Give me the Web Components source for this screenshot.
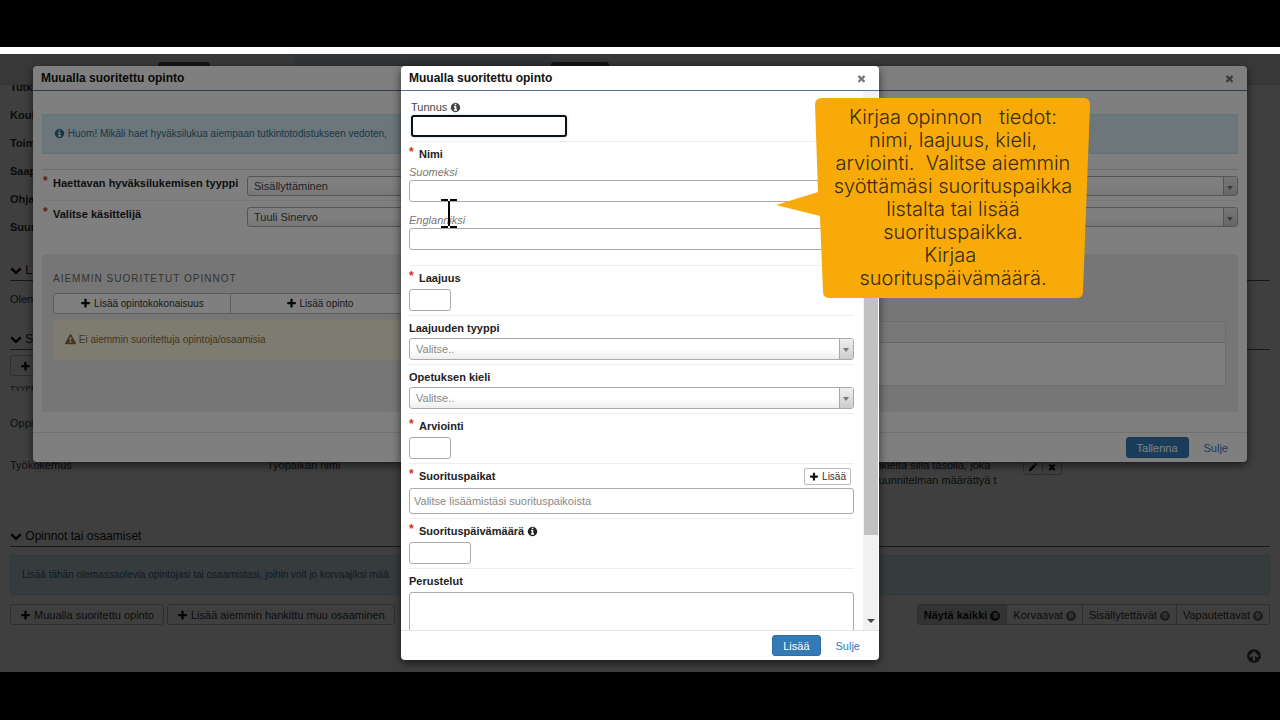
<!DOCTYPE html>
<html lang="fi">
<head>
    <meta charset="UTF-8">
    <meta name="viewport" content="width=device-width, initial-scale=1.0">
    <title>Muualla suoritettu opinto</title>
    <style>
        body {
            margin: 0;
            background: #000;
            color: #333;
            font: 11px/16px "Liberation Sans", Arial, sans-serif;
        }
    </style>
</head>
<body>
    <study-app></study-app>

    <script>
        const ICONS = {
            'plus': 'M1600 736v192q0 40-28 68t-68 28h-416v416q0 40-28 68t-68 28h-192q-40 0-68-28t-28-68v-416h-416q-40 0-68-28t-28-68v-192q0-40 28-68t68-28h416v-416q0-40 28-68t68-28h192q40 0 68 28t28 68v416h416q40 0 68 28t28 68z',
            'info': 'M1152 1376v-160q0-14-9-23t-23-9h-96v-512q0-14-9-23t-23-9h-320q-14 0-23 9t-9 23v160q0 14 9 23t23 9h96v320h-96q-14 0-23 9t-9 23v160q0 14 9 23t23 9h448q14 0 23-9t9-23zm-128-896v-160q0-14-9-23t-23-9h-192q-14 0-23 9t-9 23v160q0 14 9 23t23 9h192q14 0 23-9t9-23zm640 416q0 209-103 385.5t-279.5 279.5-385.5 103-385.5-103-279.5-279.5-103-385.5 103-385.5 279.5-279.5 385.5-103 385.5 103 279.5 279.5 103 385.5z',
            'chevron': 'M1683 808l-742 741q-19 19-45 19t-45-19l-742-741q-19-19-19-45.5t19-45.5l166-165q19-19 45-19t45 19l531 531 531-531q19-19 45-19t45 19l166 165q19 19 19 45.5t-19 45.5z',
            'warning': 'M1024 1375v-190q0-14-9.5-23.5t-22.5-9.5h-192q-13 0-22.5 9.5t-9.5 23.5v190q0 14 9.5 23.5t22.5 9.5h192q13 0 22.5-9.5t9.5-23.5zm-2-374l18-459q0-12-10-19-13-11-24-11h-220q-11 0-24 11-10 7-10 21l17 457q0 10 10 16.5t24 6.5h185q14 0 23.5-6.5t10.5-16.5zm-14-934l768 1408q35 63-2 126-17 29-46.5 46t-63.5 17h-1536q-34 0-63.5-17t-46.5-46q-37-63-2-126l768-1408q17-31 47-49t65-18 65 18 47 49z',
            'times': 'M1490 1322q0 40-28 68l-136 136q-28 28-68 28t-68-28l-294-294-294 294q-28 28-68 28t-68-28l-136-136q-28-28-28-68t28-68l294-294-294-294q-28-28-28-68t28-68l136-136q28-28 68-28t68 28l294 294 294-294q28-28 68-28t68 28l136 136q28 28 28 68t-28 68l-294 294 294 294q28 28 28 68z',
            'pencil': 'M128 1664l110-470 780-780 360 360-780 780zM1110 322l130-130q68-68 136 0l224 224q68 68 0 136l-130 130z',
            'up': 'M1412 897q0-27-18-45l-362-362-91-91q-18-18-45-18t-45 18l-91 91-362 362q-18 18-18 45t18 45l91 91q18 18 45 18t45-18l189-189v502q0 26 19 45t45 19h128q26 0 45-19t19-45v-502l189 189q19 19 45 19t45-19l91-91q18-18 18-45zm252-1q0 209-103 385.5t-279.5 279.5-385.5 103-385.5-103-279.5-279.5-103-385.5 103-385.5 279.5-279.5 385.5-103 385.5 103 279.5 279.5 103 385.5z'
        };

        /** Font icon drawn as inline SVG. */
        class StudyIcon extends HTMLElement {
            constructor() {
                super();
                this.attachShadow({ mode: 'open' });
            }

            connectedCallback() {
                this.shadowRoot.innerHTML = `
                    <style>
                        :host { display: inline-block; width: 11px; height: 11px; vertical-align: -2px; }
                        svg { display: block; width: 100%; height: 100%; fill: currentColor; }
                    </style>
                    <svg viewBox="0 0 1792 1792" aria-hidden="true"><path d="${ICONS[this.getAttribute('name')]}"/></svg>
                `;
            }
        }
        customElements.define('study-icon', StudyIcon);

        /** Button. kind: default, primary, link or filter. */
        class StudyButton extends HTMLElement {
            constructor() {
                super();
                this.attachShadow({ mode: 'open' });
            }

            connectedCallback() {
                const icon = this.getAttribute('icon');
                const label = this.getAttribute('label') || '';
                this.shadowRoot.innerHTML = `
                    <style>
                        :host { display: inline-flex; }
                        button {
                            flex: 1;
                            box-sizing: border-box;
                            height: 21px;
                            padding: 0 9px;
                            border: 1px solid #bbb;
                            border-radius: 3px;
                            background: #fff;
                            color: #333;
                            font: inherit;
                            line-height: 16px;
                            white-space: nowrap;
                        }
                        study-icon { color: #111; }
                        :host([kind="primary"]) button {
                            padding: 0 10px;
                            background: #337ab7;
                            border-color: #2e6da4;
                            color: #fff;
                        }
                        :host([kind="link"]) button {
                            padding: 0 10px;
                            background: none;
                            border-color: transparent;
                            color: #337ab7;
                        }
                        :host([size="small"]) button { height: 17px; padding: 0 4px; font-size: 10px; line-height: 14px; border-radius: 2px; }
                        :host([size="small"]) study-icon { width: 10px; height: 10px; }
                        :host([group]) button { border-radius: 0; }
                        :host([group]:not(:first-child)) button { border-left: 0; }
                        :host([group]:first-child) button { border-radius: 3px 0 0 3px; }
                        :host([group]:last-child) button { border-radius: 0 3px 3px 0; }
                        :host([kind="filter"]) button { padding: 0 6px; }
                        :host([active]) button { background: #ccc; font-weight: bold; color: #111; }
                        .count {
                            display: inline-block;
                            width: 10px;
                            height: 10px;
                            border-radius: 5px;
                            background: #777;
                            color: #fff;
                            font: bold 8px/10px "Liberation Sans", Arial, sans-serif;
                            text-align: center;
                            vertical-align: 1px;
                        }
                        :host([active]) .count { background: #222; }
                    </style>
                    <button type="button" ${label ? '' : `aria-label="${this.getAttribute('hint')}"`}>${icon ? `<study-icon name="${icon}"></study-icon> ` : ''}${label}${this.hasAttribute('count') ? ` <span class="count">${this.getAttribute('count')}</span>` : ''}</button>
                `;
            }
        }
        customElements.define('study-button', StudyButton);

        /** Message box. kind: info or warning. */
        class StudyAlert extends HTMLElement {
            constructor() {
                super();
                this.attachShadow({ mode: 'open' });
                this.shadowRoot.innerHTML = `
                    <style>
                        :host {
                            display: block;
                            box-sizing: border-box;
                            padding: 11px;
                            border: 1px solid #bce8f1;
                            background: #d9edf7;
                            color: #31708f;
                            font-size: 10px;
                            white-space: nowrap;
                            overflow: hidden;
                        }
                        :host([kind="warning"]) { background: #fcf8e3; border-color: #faf2cc; color: #8a6d3b; }
                    </style>
                    <slot></slot>
                `;
            }
        }
        customElements.define('study-alert', StudyAlert);

        class SectionHeading extends HTMLElement {
            constructor() {
                super();
                this.attachShadow({ mode: 'open' });
                this.shadowRoot.innerHTML = `
                    <style>
                        :host { display: block; border-bottom: 1px solid #5a5a78; }
                        h2 { margin: 0; padding-bottom: 1px; font-size: 12px; font-weight: normal; line-height: 18px; color: #111; }
                        study-icon { width: 12px; height: 12px; }
                    </style>
                    <h2><study-icon name="chevron"></study-icon> <slot></slot></h2>
                `;
            }
        }
        customElements.define('section-heading', SectionHeading);

        /** Form row: label and its control. type: text, select, languages or textarea. */
        class FormRow extends HTMLElement {
            constructor() {
                super();
                this.attachShadow({ mode: 'open' });
            }

            control() {
                const hint = this.getAttribute('placeholder') || '';
                switch (this.getAttribute('type')) {
                    case 'select':
                        return `<span class="select"><select id="c"><option>${hint}</option></select></span>`;
                    case 'textarea':
                        return '<textarea id="c" rows="4"></textarea>';
                    case 'languages':
                        return `
                            <label class="lang" for="c">Suomeksi</label><input id="c" type="text">
                            <label class="lang next" for="en">Englanniksi</label><input id="en" type="text">`;
                    default:
                        return `<input id="c" type="text" placeholder="${hint}">`;
                }
            }

            connectedCallback() {
                const info = this.hasAttribute('info') ? ' <study-icon name="info"></study-icon>' : '';
                this.shadowRoot.innerHTML = `
                    <style>
                        :host { display: block; padding: 4px 0; border-bottom: 1px solid #eee; }
                        :host([type="languages"]) { padding-bottom: 15px; }
                        :host([code]) { padding: 7px 2px 4px; }
                        :host([last]) { border: 0; }
                        .head { display: flex; justify-content: space-between; margin-bottom: 3px; }
                        :host([type="select"]) .head, :host([type="languages"]) .head { margin-bottom: 2px; }
                        :host([code]) .head { margin-bottom: 0; }
                        .head label { font-weight: bold; color: #222; }
                        :host([code]) label { font-weight: normal; color: #444; }
                        .star { display: inline-block; width: 10px; color: #d43020; font-size: 12px; line-height: 12px; vertical-align: top; }
                        ::slotted(study-button) { margin-right: 3px; }
                        .lang { display: block; font-style: italic; color: #777; }
                        .next { margin-top: 10px; }
                        input, select, textarea {
                            display: block;
                            box-sizing: border-box;
                            width: 100%;
                            height: 22px;
                            margin: 0;
                            padding: 0 4px;
                            border: 1px solid #aaa;
                            border-radius: 3px;
                            background: #fff;
                            color: #444;
                            font: inherit;
                        }
                        input::placeholder { color: #888; }
                        :host([width="small"]) input { width: 42px; }
                        :host([width="date"]) input { width: 62px; }
                        :host([tall]) input { height: 26px; }
                        :host([code]) input { width: 156px; border: 2px solid #101010; box-shadow: 0 0 3px #b9d3ee; }
                        textarea { height: 72px; resize: none; }
                        .select { display: block; position: relative; }
                        select {
                            appearance: none;
                            padding: 0 6px;
                            color: #888;
                            background: linear-gradient(#fff 50%, #eee);
                        }
                        .select::before {
                            content: "";
                            position: absolute;
                            inset: 1px 1px 1px auto;
                            width: 13px;
                            border-left: 1px solid #aaa;
                            border-radius: 0 2px 2px 0;
                            background: linear-gradient(#f0f0f0, #ccc);
                            pointer-events: none;
                        }
                        .select::after {
                            content: "";
                            position: absolute;
                            right: 5px;
                            top: 10px;
                            border: 3px solid transparent;
                            border-top: 4px solid #777;
                            border-bottom: 0;
                            pointer-events: none;
                        }
                        :host([inline]) {
                            display: grid;
                            grid-template-columns: 205px 1fr;
                            padding: 6px 0 4px;
                        }
                        :host([inline]) .head { margin: 0; padding-left: 1px; }
                        :host([inline]) .head label { margin-top: -1px; }
                        :host([inline]) select { height: 20px; color: #444; }
                    </style>
                    <div class="head"><label for="c">${this.hasAttribute('required') ? '<span class="star">*</span>' : ''}${this.getAttribute('label')}${info}</label><slot></slot></div>
                    <div>${this.control()}</div>
                `;
            }
        }
        customElements.define('form-row', FormRow);

        /** Dialog over a half-transparent backdrop. */
        class StudyModal extends HTMLElement {
            constructor() {
                super();
                this.attachShadow({ mode: 'open' });
            }

            connectedCallback() {
                this.shadowRoot.innerHTML = `
                    <style>
                        :host {
                            position: absolute;
                            inset: 0;
                            display: flex;
                            justify-content: center;
                            align-items: flex-start;
                            padding: 12px 33px;
                            background: rgba(0, 0, 0, 0.5);
                        }
                        section {
                            display: flex;
                            flex-direction: column;
                            flex: 1;
                            border-radius: 4px;
                            background: #fff;
                            box-shadow: 0 3px 10px rgba(0, 0, 0, 0.6);
                            overflow: hidden;
                        }
                        :host([narrow]) section { max-width: 478px; max-height: 100%; }
                        header {
                            display: flex;
                            flex: none;
                            justify-content: space-between;
                            align-items: center;
                            height: 24px;
                            padding: 0 12px 0 8px;
                            border-bottom: 1px solid #5a70a0;
                        }
                        h1 { margin: 0; font-size: 12px; line-height: 16px; color: #111; }
                        .close { padding: 0; border: 0; background: none; color: #777; line-height: 0; }
                        .main { display: flex; flex: 1; min-height: 0; overflow: hidden; }
                        .content { flex: 1; min-width: 0; padding: 23px 9px 20px; }
                        :host([narrow]) .content { padding: 1px 9px 0 8px; }
                        .bar { display: none; }
                        :host([narrow]) .bar {
                            display: flex;
                            flex-direction: column;
                            justify-content: flex-end;
                            width: 15px;
                            padding-top: 17px;
                            margin-right: 1px;
                            background: #f1f1f1;
                        }
                        .thumb { flex: 1; background: #c1c1c1; margin: 0 0 84px 1px; }
                        .down {
                            margin: 0 auto 7px;
                            border: 4px solid transparent;
                            border-top-color: #444;
                            border-bottom: 0;
                        }
                        footer {
                            display: flex;
                            flex: none;
                            justify-content: flex-end;
                            gap: 4px;
                            padding: 4px 8px;
                            border-top: 1px solid #e5e5e5;
                        }
                    </style>
                    <section role="dialog" aria-label="${this.getAttribute('heading')}">
                        <header>
                            <h1>${this.getAttribute('heading')}</h1>
                            <button class="close" type="button" aria-label="Sulje"><study-icon name="times"></study-icon></button>
                        </header>
                        <div class="main">
                            <div class="content"><slot></slot></div>
                            <div class="bar"><div class="thumb"></div><div class="down"></div></div>
                        </div>
                        <footer>
                            <study-button kind="primary" label="${this.getAttribute('action')}"></study-button>
                            <study-button kind="link" label="Sulje"></study-button>
                        </footer>
                    </section>
                `;
            }
        }
        customElements.define('study-modal', StudyModal);

        /** Instruction bubble pointing at the form. */
        class HelpBubble extends HTMLElement {
            constructor() {
                super();
                this.attachShadow({ mode: 'open' });
                this.shadowRoot.innerHTML = `
                    <style>
                        :host { position: absolute; display: block; width: 315px; height: 202px; }
                        svg { position: absolute; inset: 0; }
                        p {
                            position: relative;
                            margin: 0;
                            padding: 9px 0 0 39px;
                            color: #3a2c10;
                            font: 300 20px/23px Inter, "Open Sans", sans-serif;
                            text-align: center;
                            white-space: pre;
                        }
                    </style>
                    <svg width="315" height="202" viewBox="0 0 315 202" aria-hidden="true">
                        <path fill="#f8ab08" d="M46 1H308Q314 1 314 8L307 195Q307 201 300 201H54Q47 201 47 195L44 119L0 108L42 95L39 8Q39 1 46 1Z"/>
                    </svg>
                    <p><slot></slot></p>
                `;
            }
        }
        customElements.define('help-bubble', HelpBubble);

        /** The plan page that lies behind the dialogs. */
        class PlanPage extends HTMLElement {
            constructor() {
                super();
                this.attachShadow({ mode: 'open' });
                this.shadowRoot.innerHTML = `
                    <style>
                        :host { display: block; background: #fff; }
                        nav {
                            display: flex;
                            align-items: flex-end;
                            height: 30px;
                            background: #e3e3e3;
                            border-bottom: 1px solid #ccc;
                        }
                        nav span { height: 22px; border-radius: 3px 3px 0 0; background: #555; }
                        nav span:nth-child(1) { margin-left: 158px; width: 52px; }
                        nav span:nth-child(2) { margin-left: 85px; width: 256px; height: 30px; border-radius: 0; background: #c8d4dc; }
                        nav span:nth-child(3) { width: 58px; }
                        main { padding: 0 10px; }
                        ul { margin: 0; padding: 0; list-style: none; font-weight: bold; line-height: 28px; color: #333; overflow: hidden; }
                        li { height: 28px; }
                        ul li:first-child { height: 16px; line-height: 4px; }
                        p { margin: 0; }
                        .first { margin-top: 20px; }
                        .goal { margin: 10px 0 23px; }
                        .add { display: flex; margin: 5px 0 6px; }
                        table { width: 100%; border-collapse: collapse; table-layout: fixed; }
                        th, td { padding: 0; text-align: left; vertical-align: top; font-weight: normal; line-height: 15px; white-space: nowrap; }
                        th { font-size: 8px; line-height: 14px; }
                        tr { height: 42px; }
                        thead tr { height: 34px; }
                        tbody tr:last-child { height: 69px; }
                        .name { width: 257px; }
                        .wide { width: 606px; }
                        .reason { width: 150px; }
                        .tools { display: flex; }
                        study-alert { margin: 8px 0 9px; }
                        .row { display: flex; gap: 3px; }
                        .filters { display: flex; margin-left: auto; }
                        .top { display: flex; justify-content: flex-end; padding: 23px 8px 0; }
                        .top a { color: #444; line-height: 0; }
                        .top study-icon { width: 16px; height: 16px; }
                    </style>
                    <nav><span></span><span></span><span></span></nav>
                    <main>
                        <ul><li>Tutk</li><li>Koul</li><li>Toim</li><li>Saap</li><li>Ohja</li><li>Suun</li></ul>
                        <section-heading class="first">L</section-heading>
                        <p class="goal">Olen</p>
                        <section-heading>S</section-heading>
                        <div class="add"><study-button icon="plus" hint="Lisää"></study-button></div>
                        <table>
                            <thead><tr><th class="name">TYYPPI</th><th class="wide"></th><th class="reason"></th><th></th></tr></thead>
                            <tbody>
                                <tr><td>Oppi</td><td></td><td></td><td></td></tr>
                                <tr>
                                    <td>Työkokemus</td>
                                    <td>Työpaikan nimi</td>
                                    <td>inkielta sillä tasolla, joka<br>suunnitelman määrättyä t</td>
                                    <td><div class="tools"><study-button group size="small" icon="pencil" hint="Muokkaa"></study-button><study-button group size="small" icon="times" hint="Poista"></study-button></div></td>
                                </tr>
                            </tbody>
                        </table>
                        <section-heading>Opinnot tai osaamiset</section-heading>
                        <study-alert>Lisää tähän olemassaolevia opintojasi tai osaamistasi, joihin voit jo korvaajiksi mää</study-alert>
                        <div class="row">
                            <study-button icon="plus" label="Muualla suoritettu opinto"></study-button>
                            <study-button icon="plus" label="Lisää aiemmin hankittu muu osaaminen"></study-button>
                            <div class="filters">
                                <study-button group kind="filter" active label="Näytä kaikki" count="0"></study-button>
                                <study-button group kind="filter" label="Korvaavat" count="0"></study-button>
                                <study-button group kind="filter" label="Sisällytettävät" count="0"></study-button>
                                <study-button group kind="filter" label="Vapautettavat" count="0"></study-button>
                            </div>
                        </div>
                        <div class="top"><a href="#" aria-label="Sivun alkuun"><study-icon name="up"></study-icon></a></div>
                    </main>
                `;
            }
        }
        customElements.define('plan-page', PlanPage);

        /** Whole view: page, two stacked dialogs, bubble and pointer. */
        class StudyApp extends HTMLElement {
            constructor() {
                super();
                this.attachShadow({ mode: 'open' });
                this.shadowRoot.innerHTML = `
                    <style>
                        :host {
                            display: flex;
                            flex-direction: column;
                            box-sizing: border-box;
                            height: 100vh;
                            padding: 47px 0 48px;
                        }
                        .strip { height: 7px; background: #fff; }
                        .stage { position: relative; flex: 1; min-height: 0; overflow: hidden; }
                        plan-page { min-height: 100%; }
                        .form { border-top: 1px solid #ddd; margin: 15px 0 23px; }
                        .panel {
                            display: grid;
                            grid-template-columns: 356px 1fr;
                            gap: 10px;
                            padding: 17px 12px 26px 11px;
                            border-radius: 3px;
                            background: #ededed;
                        }
                        h3 { margin: 0 0 6px; font-size: 10px; font-weight: normal; line-height: 16px; letter-spacing: 1px; color: #666; }
                        .pair { display: grid; grid-template-columns: 1fr 1fr; font-size: 10px; margin-bottom: 6px; }
                        .result { margin: 50px 0 0; border: 1px solid #ddd; background: #fff; }
                        .result::before { content: ""; display: block; height: 20px; background: #f0f0f0; border-bottom: 1px solid #ccc; }
                        .result::after { content: ""; display: block; height: 42px; }
                        help-bubble { left: calc(50% + 136px); top: 43px; }
                        .pointer { position: absolute; left: calc(50% - 200px); top: 145px; }
                    </style>
                    <div class="strip"></div>
                    <div class="stage">
                        <plan-page></plan-page>
                        <study-modal heading="Muualla suoritettu opinto" action="Tallenna">
                            <study-alert><study-icon name="info"></study-icon> Huom! Mikäli haet hyväksilukua aiempaan tutkintotodistukseen vedoten,</study-alert>
                            <div class="form">
                                <form-row inline required type="select" label="Haettavan hyväksilukemisen tyyppi" placeholder="Sisällyttäminen"></form-row>
                                <form-row inline last required type="select" label="Valitse käsittelijä" placeholder="Tuuli Sinervo"></form-row>
                            </div>
                            <div class="panel">
                                <div>
                                    <h3>AIEMMIN SUORITETUT OPINNOT</h3>
                                    <div class="pair">
                                        <study-button group icon="plus" label="Lisää opintokokonaisuus"></study-button>
                                        <study-button group icon="plus" label="Lisää opinto"></study-button>
                                    </div>
                                    <study-alert kind="warning"><study-icon name="warning"></study-icon> Ei aiemmin suoritettuja opintoja/osaamisia</study-alert>
                                </div>
                                <div class="result"></div>
                            </div>
                        </study-modal>
                        <study-modal narrow heading="Muualla suoritettu opinto" action="Lisää">
                            <form-row code info label="Tunnus"></form-row>
                            <form-row required type="languages" label="Nimi"></form-row>
                            <form-row required width="small" label="Laajuus"></form-row>
                            <form-row type="select" label="Laajuuden tyyppi" placeholder="Valitse.."></form-row>
                            <form-row type="select" label="Opetuksen kieli" placeholder="Valitse.."></form-row>
                            <form-row required width="small" label="Arviointi"></form-row>
                            <form-row required tall label="Suorituspaikat" placeholder="Valitse lisäämistäsi suorituspaikoista">
                                <study-button size="small" icon="plus" label="Lisää"></study-button>
                            </form-row>
                            <form-row required info width="date" label="Suorituspäivämäärä"></form-row>
                            <form-row type="textarea" label="Perustelut"></form-row>
                        </study-modal>
                        <help-bubble>Kirjaa opinnon   tiedot:
nimi, laajuus, kieli,
arviointi.  Valitse aiemmin
syöttämäsi suorituspaikka
listalta tai lisää
suorituspaikka.
Kirjaa 
suorituspäivämäärä.</help-bubble>
                        <svg class="pointer" width="18" height="29" viewBox="0 0 18 29" aria-hidden="true">
                            <path d="M1 1H8M10 1H17M9 2V27M1 28H8M10 28H17" fill="none" stroke="#000" stroke-width="2"/>
                        </svg>
                    </div>
                `;
            }
        }
        customElements.define('study-app', StudyApp);
    </script>
</body>
</html>
